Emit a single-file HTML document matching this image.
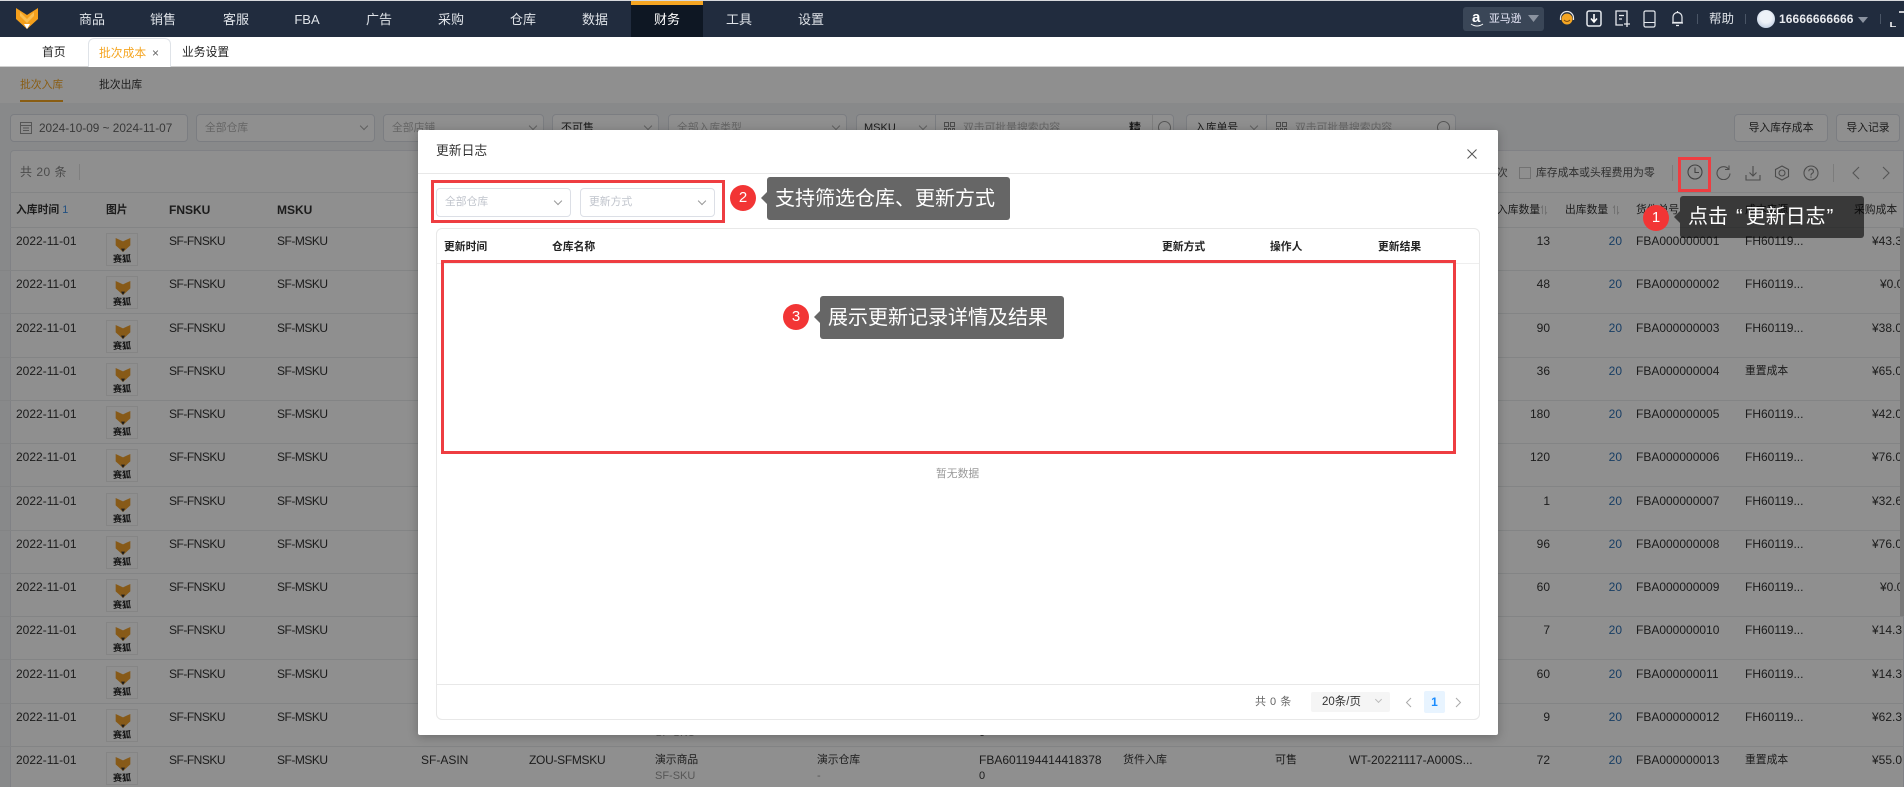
<!DOCTYPE html>
<html lang="zh"><head><meta charset="utf-8"><title>批次成本</title>
<style>
*{box-sizing:border-box}
html,body{margin:0;padding:0;width:1904px;height:787px;overflow:hidden;background:#f3f4f6;font:12px/14px "Liberation Sans","Noto Sans CJK SC",sans-serif;color:#333}
#page{position:relative;width:1904px;height:787px;overflow:hidden}
.abs{position:absolute;white-space:nowrap}
.z{font-size:10.800px}
#nav{left:0;top:0;width:1904px;height:37px;background:#212c3e;border-top:1px solid #d8dadd;color:#dfe3e8;font-size:13px}
#nav span.m{position:absolute;top:11px;width:72px;text-align:center;line-height:16px}
#act{position:absolute;left:631px;top:0;width:72px;height:36px;background:#0e1723;border-top:4px solid #f5a623}
#tabs{left:0;top:37px;width:1904px;height:30px;background:#fff;border-bottom:1px solid #d0d0d0;font-size:11.800px}
#tab{position:absolute;left:88px;top:1px;width:83px;height:29px;border:1px solid #dfe3e8;border-bottom:0;border-radius:6px 6px 0 0;background:#fff}
.ov{position:absolute;left:0;top:67px;width:1904px;height:720px;background:rgba(0,0,0,.44)}
.in{position:absolute;top:114px;height:28px;border:1px solid #dcdfe6;border-radius:4px;background:#fff;color:#b5b5b5;padding-left:8px;line-height:26px;white-space:nowrap;font-size:10.800px}
.chev{position:absolute;width:6px;height:6px;border-right:1px solid #aaa;border-bottom:1px solid #aaa;transform:rotate(45deg)}
#card{left:10px;top:150px;width:1894px;height:637px;background:#fff;border:1px solid #e4e7ed;border-bottom:0;border-radius:4px 0 0 0}
.l{position:absolute;left:10px;width:1894px;height:1px;background:#e9ebee}
.h{position:absolute;top:203px;font-weight:700;white-space:nowrap;color:#333}
.h2{position:absolute;top:203px;white-space:nowrap;color:#333;font-size:10.800px}
.r{position:absolute;left:0;width:1904px;height:43px;border-bottom:1px solid #e9ebee}
.r>*{position:absolute;top:6px;white-space:nowrap;font-style:normal}
.r b{font-weight:400;top:22px;color:#999;font-size:11px}
.t{left:106px;top:5px!important;width:32px;height:33px;border:1px solid #eee;text-align:center;font-size:9px;line-height:10px;font-weight:700;padding-top:20px;background:#fff;color:#222}
.t svg{position:absolute;left:8px;top:4px}
.c1{left:16px}.c3{left:169px;letter-spacing:-.5px}.c4{left:277px;letter-spacing:-.5px}.c5{left:421px}.c6{left:529px;letter-spacing:-.3px}.c7{left:655px;font-size:10.800px}.c8{left:817px;font-size:10.800px}.c9{left:979px}.c10{left:1123px;font-size:11px}.c11{left:1275px;font-size:11px}.c12{left:1349px}
.c13{right:354px}.c14{right:282px;color:#2c6fb3}.c15{left:1636px}.c16{left:1745px}.c17{left:1872px}
#modal{position:absolute;left:418px;top:130px;width:1080px;height:605px;background:#fff;border-radius:2px;box-shadow:0 2px 10px rgba(0,0,0,.25)}
.sel{position:absolute;top:188px;height:29px;border:1px solid #dcdfe6;border-radius:4px;background:#fff;color:#c0c4cc;line-height:27px;padding-left:8px;font-size:10.800px}
.mh{position:absolute;top:240px;font-weight:700;color:#222;font-size:10.800px;white-space:nowrap}
.rb{position:absolute;border:3px solid #ee3d41}
.tip{position:absolute;background:rgba(0,0,0,.6);color:#fff;font-size:20px;line-height:44px;border-radius:3px;white-space:nowrap;padding-left:8px}
.tip:before{content:"";position:absolute;left:-6px;top:15px;border:6px solid transparent;border-left:0;border-right-color:rgba(0,0,0,.6)}
.num{position:absolute;width:26px;height:26px;border-radius:50%;background:#f23535;color:#fff;text-align:center;font-size:15px;line-height:25px}
</style></head><body>
<div id="page">
<svg width="0" height="0" style="position:absolute"><defs>
<symbol id="fox" viewBox="0 0 22 21"><path d="M0 0 L11 7 L22 0 L22 11 L11 21 L0 11Z" fill="#f5a01c"/><path d="M4 4 L11 11 L18 4 L18 8 L11 15 L4 8Z" fill="#fbbf52"/><path d="M8 16 L14 16 L11 21Z" fill="#fff"/></symbol>
<symbol id="fx" viewBox="0 0 22 21"><path d="M0 0 L11 5 L22 0 L22 11 L11 21 L0 11Z" fill="#f0a02c"/><path d="M8 16 L14 16 L11 21Z" fill="#333"/></symbol>
<symbol id="srt" viewBox="0 0 8 10"><path d="M2.500 9V1L1 3M5.500 1V9L7 7" fill="none" stroke="#c2c2c2" stroke-width=".8"/></symbol>
<symbol id="grid" viewBox="0 0 11 11"><path d="M.5 .5H4.500V4.500H.5ZM6.500 .5H10.500V4.500H6.500ZM.5 6.500H2.500V10.500H.5ZM4.500 6.500H6.500V10.500H4.500ZM8.500 6.500H10.500V10.500H8.500Z" fill="none" stroke="#888"/></symbol>
</defs></svg>

<div class="abs" id="nav" style="white-space:normal">
<svg style="position:absolute;left:16px;top:7px" width="22" height="21"><use href="#fox"/></svg>
<div id="act"></div>
<span class="m" style="left:56px">商品</span><span class="m" style="left:127px">销售</span><span class="m" style="left:200px">客服</span><span class="m" style="left:271px">FBA</span><span class="m" style="left:343px">广告</span><span class="m" style="left:415px">采购</span><span class="m" style="left:487px">仓库</span><span class="m" style="left:559px">数据</span><span class="m" style="left:631px;color:#fff">财务</span><span class="m" style="left:703px">工具</span><span class="m" style="left:775px">设置</span>
<div class="abs" style="left:1463px;top:6px;width:81px;height:24px;background:#3a4657;border-radius:3px"></div>
<span class="abs" style="left:1472px;top:9px;font-size:15px;line-height:16px;font-weight:700;color:#fff">a</span>
<svg class="abs" style="left:1470px;top:22px" width="14" height="5"><path d="M1 1q6 4 12 0" fill="none" stroke="#fff" stroke-width="1"/></svg>
<span class="abs" style="left:1489px;top:11px;font-size:10.800px;color:#eef">亚马逊</span>
<svg class="abs" style="left:1528px;top:14px" width="11" height="8"><path d="M0 0H11L5.500 7Z" fill="#8b93a0"/></svg>
<svg class="abs" style="left:1559px;top:9px" width="16" height="18"><circle cx="8" cy="9" r="5.500" fill="#f5a623"/><path d="M1.500 10V8a6.500 6.500 0 0 1 13 0v2" fill="none" stroke="#e8e8e8" stroke-width="1.200"/><path d="M5 10q3 3 6 0" fill="none" stroke="#7a4a10"/></svg>
<svg class="abs" style="left:1586px;top:9px" width="16" height="17"><rect x="1" y="1" width="14" height="15" rx="2" fill="none" stroke="#e6e9ee" stroke-width="1.500"/><path d="M8 4V11M5 8.500L8 12 11 8.500" fill="none" stroke="#fff" stroke-width="1.600"/></svg>
<svg class="abs" style="left:1614px;top:9px" width="17" height="18"><path d="M13 11V1H2V15H9" fill="none" stroke="#e6e9ee" stroke-width="1.300"/><path d="M5 5.500H10M5 9H8M13 11V17M10 14H16" fill="none" stroke="#e6e9ee" stroke-width="1.300"/></svg>
<svg class="abs" style="left:1643px;top:9px" width="13" height="18"><rect x="1" y="1" width="11" height="16" rx="1.500" fill="none" stroke="#e6e9ee" stroke-width="1.200"/><path d="M1 12.500H12" stroke="#e6e9ee"/></svg>
<svg class="abs" style="left:1671px;top:9px" width="13" height="17"><path d="M2 12.500V7a4.500 4.500 0 0 1 9 0v5.500zM1 13H12M5 15.500H8M6.500 1V2.500" fill="none" stroke="#e6e9ee" stroke-width="1.200"/></svg>
<div class="abs" style="left:1697px;top:13px;width:1px;height:10px;background:#4a5566"></div>
<span class="abs" style="left:1709px;top:10px;font-size:12.500px;line-height:16px">帮助</span>
<div class="abs" style="left:1745px;top:13px;width:1px;height:10px;background:#4a5566"></div>
<div class="abs" style="left:1757px;top:9px;width:18px;height:18px;border-radius:50%;background:radial-gradient(circle at 50% 40%,#eef2f8 40%,#a9bcd6)"></div>
<span class="abs" style="left:1779px;top:11px;font-size:12px;letter-spacing:.1px;font-weight:700;color:#e8eaee">16666666666</span>
<svg class="abs" style="left:1858px;top:16px" width="10" height="7"><path d="M0 0H10L5 6Z" fill="#8b93a0"/></svg>
<div class="abs" style="left:1880px;top:13px;width:1px;height:10px;background:#4a5566"></div>
<svg class="abs" style="left:1890px;top:10px" width="14" height="16"><path d="M1 11V16H6M9 1H14" fill="none" stroke="#fff" stroke-width="1.500"/></svg>
</div>

<div class="abs" id="tabs" style="white-space:normal">
<span class="abs" style="left:42px;top:8px;color:#222">首页</span>
<div id="tab"><span class="abs" style="left:10px;top:7px;color:#f5a623">批次成本</span><span class="abs" style="left:63px;top:7px;color:#666;font-size:12px">×</span></div>
<span class="abs" style="left:182px;top:8px;color:#222">业务设置</span>
</div>

<!-- page under overlay -->
<div class="abs" style="left:0;top:67px;width:1904px;height:36px;background:#fff"></div>
<span class="abs z" style="left:20px;top:78px;color:#f5a623">批次入库</span>
<span class="abs z" style="left:99px;top:78px;color:#333">批次出库</span>
<div class="abs" style="left:20px;top:100px;width:43px;height:2px;background:#f5a623"></div>

<div class="in" style="left:10px;width:178px;padding-left:28px;color:#666;font-size:11.800px">2024-10-09 ~ 2024-11-07</div>
<svg class="abs" style="left:20px;top:121px" width="12" height="13"><rect x=".5" y="1.500" width="11" height="11" fill="none" stroke="#999"/><path d="M.5 4.500H11.500M3 7H9M3 9.500H9" stroke="#999"/></svg>
<div class="in" style="left:196px;width:179px">全部仓库<i class="chev" style="left:164px;top:8px"></i></div>
<div class="in" style="left:383px;width:161px">全部店铺<i class="chev" style="left:146px;top:8px"></i></div>
<div class="in" style="left:552px;width:107px;color:#333;font-size:11px">不可售<i class="chev" style="left:92px;top:8px"></i></div>
<div class="in" style="left:668px;width:179px">全部入库类型<i class="chev" style="left:164px;top:8px"></i></div>
<div class="in" style="left:856px;width:80px;color:#333;border-radius:4px 0 0 4px;padding-left:7px;font-size:11px">MSKU<i class="chev" style="left:63px;top:8px"></i></div>
<div class="in" style="left:935px;width:239px;border-radius:0 4px 4px 0;padding-left:27px"><svg class="abs" style="left:8px;top:7px" width="11" height="11"><use href="#grid"/></svg>双击可批量搜索内容<b class="abs" style="left:193px;top:0;color:#333;font-size:12px">精</b><i class="abs" style="left:216px;top:0;width:1px;height:26px;background:#e3e3e3"></i><i class="abs" style="left:222px;top:6px;width:13px;height:13px;border:1px solid #999;border-radius:50%"></i></div>
<div class="in" style="left:1186px;width:81px;color:#333;border-radius:4px 0 0 4px">入库单号<i class="chev" style="left:64px;top:8px"></i></div>
<div class="in" style="left:1266px;width:190px;border-radius:0 4px 4px 0;padding-left:28px"><svg class="abs" style="left:9px;top:7px" width="11" height="11"><use href="#grid"/></svg>双击可批量搜索内容<i class="abs" style="left:170px;top:6px;width:13px;height:13px;border:1px solid #999;border-radius:50%"></i></div>
<div class="in" style="left:1734px;width:94px;color:#333;text-align:center;padding:0">导入库存成本</div>
<div class="in" style="left:1836px;width:64px;color:#333;text-align:center;padding:0">导入记录</div>

<div class="abs" id="card"></div>
<span class="abs" style="left:20px;top:165px;color:#888;letter-spacing:.5px">共 20 条</span>
<div class="abs" style="left:79px;top:164px;width:1px;height:16px;background:#e2e2e2"></div>
<span class="abs z" style="left:1497px;top:166px;color:#666">次</span>
<div class="abs" style="left:1519px;top:167px;width:12px;height:12px;border:1px solid #ccc;background:#fff"></div>
<span class="abs z" style="left:1536px;top:166px;color:#555">库存成本或头程费用为零</span>
<div class="abs" style="left:1672px;top:165px;width:1px;height:16px;background:#ddd"></div>
<svg class="abs" style="left:1687px;top:164px" width="16" height="16"><circle cx="8" cy="8" r="7" fill="none" stroke="#777" stroke-width="1.100"/><path d="M8 3.500V8.500H12" fill="none" stroke="#777" stroke-width="1.100"/></svg>
<svg class="abs" style="left:1716px;top:165px" width="15" height="15"><path d="M12.500 4A6.500 6.500 0 1 0 14 8.500M13 .5V4.500H9" fill="none" stroke="#888" stroke-width="1.100"/></svg>
<svg class="abs" style="left:1745px;top:165px" width="16" height="16"><path d="M8 1V11M4.500 7.500L8 11 11.500 7.500M1 10V15H15V10" fill="none" stroke="#888" stroke-width="1.100"/></svg>
<svg class="abs" style="left:1774px;top:165px" width="16" height="16"><path d="M8 1L14.500 4.500V11.500L8 15 1.500 11.500V4.500Z" fill="none" stroke="#888" stroke-width="1.100"/><circle cx="8" cy="8" r="3" fill="none" stroke="#888" stroke-width="1.100"/></svg>
<svg class="abs" style="left:1803px;top:165px" width="16" height="16"><circle cx="8" cy="8" r="7" fill="none" stroke="#888" stroke-width="1.100"/><path d="M5.800 6.300a2.300 2.300 0 1 1 3.300 2.100Q8 9 8 10.500M8 11.500V12.700" fill="none" stroke="#888" stroke-width="1.100"/></svg>
<div class="abs" style="left:1833px;top:164px;width:1px;height:18px;background:#ddd"></div>
<svg class="abs" style="left:1851px;top:166px" width="9" height="14"><path d="M8 1L2 7 8 13" fill="none" stroke="#999" stroke-width="1.100"/></svg>
<svg class="abs" style="left:1882px;top:166px" width="9" height="14"><path d="M1 1L7 7 1 13" fill="none" stroke="#999" stroke-width="1.100"/></svg>

<div class="l" style="top:192px"></div>
<span class="h" style="left:16px;font-size:10.800px">入库时间 <span style="color:#3a8ee6;font-weight:400">1</span></span><span class="h" style="left:106px;font-size:10.800px">图片</span><span class="h" style="left:169px">FNSKU</span><span class="h" style="left:277px">MSKU</span>
<span class="h2" style="left:1497px">入库数量</span><svg class="abs" style="left:1540px;top:205px" width="8" height="10"><use href="#srt"/></svg>
<span class="h2" style="left:1565px">出库数量</span><svg class="abs" style="left:1612px;top:205px" width="8" height="10"><use href="#srt"/></svg>
<span class="h2" style="left:1636px">货件单号</span><span class="h2" style="left:1745px">成本来源</span><span class="h2" style="left:1854px">采购成本</span>
<div class="l" style="top:227px"></div>

<div class="r" style="top:228px"><i class="c1">2022-11-01</i><i class="t"><svg width="16" height="14"><use href="#fx"/></svg>赛狐</i><i class="c3">SF-FNSKU</i><i class="c4">SF-MSKU</i><i class="c13">13</i><i class="c14">20</i><i class="c15">FBA000000001</i><i class="c16">FH60119...</i><i class="c17">¥43.3</i></div>
<div class="r" style="top:271.250px"><i class="c1">2022-11-01</i><i class="t"><svg width="16" height="14"><use href="#fx"/></svg>赛狐</i><i class="c3">SF-FNSKU</i><i class="c4">SF-MSKU</i><i class="c13">48</i><i class="c14">20</i><i class="c15">FBA000000002</i><i class="c16">FH60119...</i><i class="c17" style="left:1880px">¥0.0</i></div>
<div class="r" style="top:314.500px"><i class="c1">2022-11-01</i><i class="t"><svg width="16" height="14"><use href="#fx"/></svg>赛狐</i><i class="c3">SF-FNSKU</i><i class="c4">SF-MSKU</i><i class="c13">90</i><i class="c14">20</i><i class="c15">FBA000000003</i><i class="c16">FH60119...</i><i class="c17">¥38.0</i></div>
<div class="r" style="top:357.750px"><i class="c1">2022-11-01</i><i class="t"><svg width="16" height="14"><use href="#fx"/></svg>赛狐</i><i class="c3">SF-FNSKU</i><i class="c4">SF-MSKU</i><i class="c13">36</i><i class="c14">20</i><i class="c15">FBA000000004</i><i class="c16 z">重置成本</i><i class="c17">¥65.0</i></div>
<div class="r" style="top:401px"><i class="c1">2022-11-01</i><i class="t"><svg width="16" height="14"><use href="#fx"/></svg>赛狐</i><i class="c3">SF-FNSKU</i><i class="c4">SF-MSKU</i><i class="c13">180</i><i class="c14">20</i><i class="c15">FBA000000005</i><i class="c16">FH60119...</i><i class="c17">¥42.0</i></div>
<div class="r" style="top:444.250px"><i class="c1">2022-11-01</i><i class="t"><svg width="16" height="14"><use href="#fx"/></svg>赛狐</i><i class="c3">SF-FNSKU</i><i class="c4">SF-MSKU</i><i class="c13">120</i><i class="c14">20</i><i class="c15">FBA000000006</i><i class="c16">FH60119...</i><i class="c17">¥76.0</i></div>
<div class="r" style="top:487.500px"><i class="c1">2022-11-01</i><i class="t"><svg width="16" height="14"><use href="#fx"/></svg>赛狐</i><i class="c3">SF-FNSKU</i><i class="c4">SF-MSKU</i><i class="c13">1</i><i class="c14">20</i><i class="c15">FBA000000007</i><i class="c16">FH60119...</i><i class="c17">¥32.6</i></div>
<div class="r" style="top:530.750px"><i class="c1">2022-11-01</i><i class="t"><svg width="16" height="14"><use href="#fx"/></svg>赛狐</i><i class="c3">SF-FNSKU</i><i class="c4">SF-MSKU</i><i class="c13">96</i><i class="c14">20</i><i class="c15">FBA000000008</i><i class="c16">FH60119...</i><i class="c17">¥76.0</i></div>
<div class="r" style="top:574px"><i class="c1">2022-11-01</i><i class="t"><svg width="16" height="14"><use href="#fx"/></svg>赛狐</i><i class="c3">SF-FNSKU</i><i class="c4">SF-MSKU</i><i class="c13">60</i><i class="c14">20</i><i class="c15">FBA000000009</i><i class="c16">FH60119...</i><i class="c17" style="left:1880px">¥0.0</i></div>
<div class="r" style="top:617.250px"><i class="c1">2022-11-01</i><i class="t"><svg width="16" height="14"><use href="#fx"/></svg>赛狐</i><i class="c3">SF-FNSKU</i><i class="c4">SF-MSKU</i><i class="c13">7</i><i class="c14">20</i><i class="c15">FBA000000010</i><i class="c16">FH60119...</i><i class="c17">¥14.3</i></div>
<div class="r" style="top:660.500px"><i class="c1">2022-11-01</i><i class="t"><svg width="16" height="14"><use href="#fx"/></svg>赛狐</i><i class="c3">SF-FNSKU</i><i class="c4">SF-MSKU</i><i class="c13">60</i><i class="c14">20</i><i class="c15">FBA000000011</i><i class="c16">FH60119...</i><i class="c17">¥14.3</i></div>
<div class="r" style="top:703.750px"><i class="c1">2022-11-01</i><i class="t"><svg width="16" height="14"><use href="#fx"/></svg>赛狐</i><i class="c3">SF-FNSKU</i><i class="c4">SF-MSKU</i><b class="c7">SF-SKU</b><b class="c9" style="color:#333">0</b><i class="c13">9</i><i class="c14">20</i><i class="c15">FBA000000012</i><i class="c16">FH60119...</i><i class="c17">¥62.3</i></div>
<div class="r" style="top:747px;height:40px;border-bottom:0"><i class="c1">2022-11-01</i><i class="t"><svg width="16" height="14"><use href="#fx"/></svg>赛狐</i><i class="c3">SF-FNSKU</i><i class="c4">SF-MSKU</i><i class="c5">SF-ASIN</i><i class="c6">ZOU-SFMSKU</i><i class="c7">演示商品</i><b class="c7">SF-SKU</b><i class="c8">演示仓库</i><b class="c8">-</b><i class="c9">FBA601194414418378</i><b class="c9" style="color:#333">0</b><i class="c10">货件入库</i><i class="c11">可售</i><i class="c12">WT-20221117-A000S...</i><i class="c13">72</i><i class="c14">20</i><i class="c15">FBA000000013</i><i class="c16 z">重置成本</i><i class="c17">¥55.0</i></div>
<div class="abs" style="left:1900px;top:228px;width:4px;height:388px;background:#d8d8d8"></div>

<div class="ov"></div>

<!-- callout 1 -->
<div class="abs rb" style="left:1678px;top:157px;width:33px;height:35px"></div>
<div class="tip" style="left:1680px;top:196px;width:184px;height:42px;line-height:42px">点击<span style="margin-left:8px;margin-right:3px">“</span>更新日志<span style="margin-left:1px">”</span></div>
<div class="num" style="left:1643px;top:205px">1</div>

<!-- modal -->
<div id="modal"></div>
<span class="abs" style="left:436px;top:143px;font-size:12.800px;line-height:16px;color:#333">更新日志</span>
<svg class="abs" style="left:1467px;top:149px" width="10" height="10"><path d="M.5 .5L9.500 9.500M9.500 .5L.5 9.500" stroke="#555"/></svg>
<div class="abs" style="left:418px;top:173px;width:1080px;height:1px;background:#e8e8e8"></div>
<div class="sel" style="left:436px;width:135px">全部仓库<i class="chev" style="left:118px;top:9px;border-color:#999"></i></div>
<div class="sel" style="left:580px;width:135px">更新方式<i class="chev" style="left:118px;top:9px;border-color:#999"></i></div>
<div class="abs" style="left:436px;top:228px;width:1044px;height:492px;border:1px solid #e8e8e8;border-radius:6px;background:#fff"></div>
<span class="mh" style="left:444px">更新时间</span>
<span class="mh" style="left:552px">仓库名称</span>
<span class="mh" style="left:1162px">更新方式</span>
<span class="mh" style="left:1270px">操作人</span>
<span class="mh" style="left:1378px">更新结果</span>
<div class="abs" style="left:437px;top:263px;width:1042px;height:1px;background:#eee"></div>
<span class="abs" style="left:936px;top:467px;font-size:10.800px;color:#999">暂无数据</span>
<div class="abs" style="left:437px;top:684px;width:1042px;height:1px;background:#e8e8e8"></div>
<span class="abs" style="left:1255px;top:695px;color:#666;letter-spacing:.5px;font-size:11px">共 0 条</span>
<div class="abs" style="left:1311px;top:692px;width:79px;height:20px;background:#f5f5f5;border-radius:2px;line-height:20px;padding-left:11px;color:#333;font-size:11.500px">20条/页<i class="chev" style="left:65px;top:5px;width:5px;height:5px;border-color:#bbb"></i></div>
<svg class="abs" style="left:1405px;top:697px" width="7" height="11"><path d="M6 1L1.500 5.500 6 10" fill="none" stroke="#aaa"/></svg>
<div class="abs" style="left:1424px;top:691px;width:21px;height:22px;background:#e8f4ff;border-radius:2px;color:#1a8cff;font-weight:700;text-align:center;line-height:22px">1</div>
<svg class="abs" style="left:1455px;top:697px" width="7" height="11"><path d="M1 1L5.500 5.500 1 10" fill="none" stroke="#aaa"/></svg>

<!-- callouts 2, 3 -->
<div class="abs rb" style="left:431px;top:180px;width:294px;height:43px"></div>
<div class="num" style="left:730px;top:185px">2</div>
<div class="tip" style="left:767px;top:177px;width:243px;height:43px">支持筛选仓库、更新方式</div>
<div class="abs rb" style="left:441px;top:260px;width:1015px;height:194px"></div>
<div class="num" style="left:783px;top:304px">3</div>
<div class="tip" style="left:820px;top:296px;width:244px;height:43px">展示更新记录详情及结果</div>
</div>
</body></html>
